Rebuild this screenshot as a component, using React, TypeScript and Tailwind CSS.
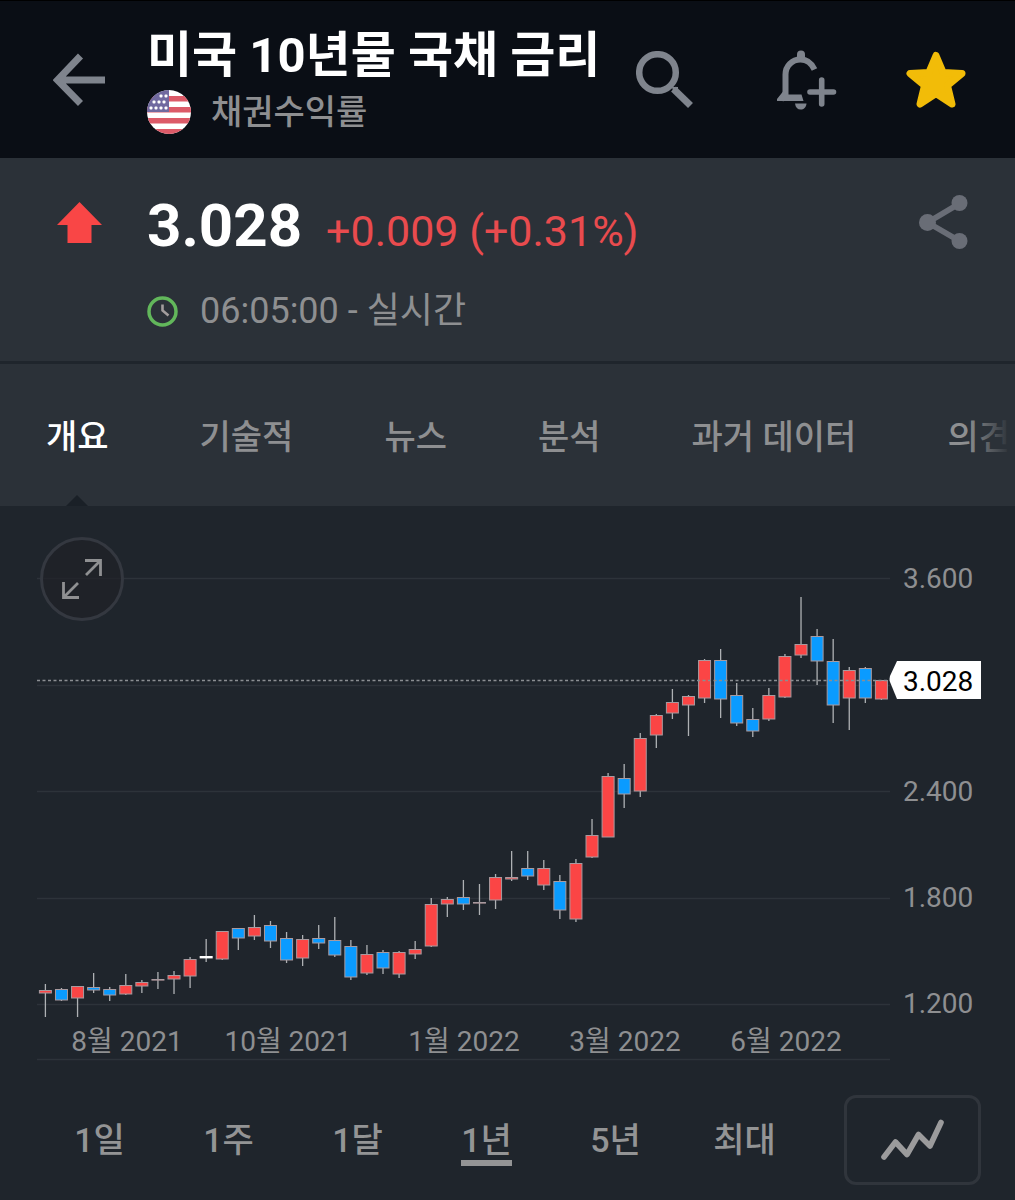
type Candle = [top: number, bottom: number, high: number, low: number, kind: 'up' | 'down' | 'flat'];

const candles: Candle[] = [
  [990, 993, 984, 1017, 'up'],
  [989, 1000, 988, 1001, 'down'],
  [986, 998, 986, 1017, 'up'],
  [987, 990, 973, 993, 'down'],
  [989, 995, 987, 1001, 'down'],
  [985, 994, 974, 995, 'up'],
  [982, 986, 980, 993, 'up'],
  [979, 980, 972, 989, 'up'],
  [975, 979, 971, 994, 'up'],
  [959, 976, 957, 988, 'up'],
  [956, 959, 939, 962, 'flat'],
  [931, 959, 931, 960, 'up'],
  [928, 938, 928, 950, 'down'],
  [927, 936, 915, 940, 'up'],
  [925, 941, 921, 948, 'down'],
  [938, 960, 932, 963, 'down'],
  [939, 958, 935, 966, 'up'],
  [938, 943, 925, 949, 'down'],
  [940, 955, 917, 957, 'down'],
  [946, 977, 940, 980, 'down'],
  [954, 973, 945, 975, 'up'],
  [952, 968, 950, 974, 'down'],
  [952, 974, 951, 978, 'up'],
  [949, 954, 941, 959, 'up'],
  [904, 946, 898, 947, 'up'],
  [899, 904, 897, 917, 'up'],
  [897, 904, 880, 910, 'down'],
  [902, 903, 884, 915, 'up'],
  [877, 900, 874, 909, 'up'],
  [877, 879, 851, 881, 'up'],
  [868, 876, 851, 880, 'down'],
  [868, 885, 860, 890, 'up'],
  [881, 910, 875, 919, 'down'],
  [863, 919, 859, 922, 'up'],
  [835, 857, 819, 858, 'up'],
  [776, 837, 773, 837, 'up'],
  [778, 794, 764, 808, 'down'],
  [738, 791, 733, 797, 'up'],
  [715, 735, 714, 748, 'up'],
  [702, 713, 689, 719, 'up'],
  [696, 705, 695, 736, 'up'],
  [660, 698, 659, 703, 'up'],
  [660, 699, 649, 718, 'down'],
  [695, 723, 683, 726, 'down'],
  [719, 731, 708, 737, 'down'],
  [695, 719, 688, 721, 'up'],
  [656, 697, 654, 698, 'up'],
  [644, 655, 597, 658, 'up'],
  [636, 661, 629, 685, 'down'],
  [661, 705, 639, 723, 'down'],
  [670, 698, 667, 730, 'up'],
  [668, 698, 667, 703, 'down'],
  [680, 699, 680, 700, 'up'],
];

const fills = { up: '#fb4545', down: '#0a9bff', flat: '#ffffff' };

const gridLines = [578, 685, 791, 898, 1004, 1059];

const priceLabels = [
  { y: 588, text: '3.600' },
  { y: 801, text: '2.400' },
  { y: 907, text: '1.800' },
  { y: 1013, text: '1.200' },
];

const dateLabels = [
  { x: 127, text: '8월 2021' },
  { x: 288, text: '10월 2021' },
  { x: 464, text: '1월 2022' },
  { x: 625, text: '3월 2022' },
  { x: 786, text: '6월 2022' },
];

const tabs = ['개요', '기술적', '뉴스', '분석', '과거 데이터', '의견'];
const periods = ['1일', '1주', '1달', '1년', '5년', '최대'];

function UsFlag() {
  const stars = [
    [14, 6], [19, 6],
    [7, 12], [12, 12], [17, 12],
    [4, 18], [9, 18], [14, 18], [19, 18],
  ];
  return (
    <svg viewBox="0 0 44 44" className="size-11 shrink-0" role="img" aria-label="미국">
      <defs>
        <clipPath id="flag-circle">
          <circle cx="22" cy="22" r="22" />
        </clipPath>
      </defs>
      <g clipPath="url(#flag-circle)">
        <rect width="44" height="44" fill="#ffffff" />
        {[6, 17, 28, 39].map((y) => (
          <rect key={y} y={y} width="44" height="5.5" fill="#dc5a68" />
        ))}
        <rect width="22" height="22" fill="#70699f" />
        {stars.map(([x, y]) => (
          <rect key={`${x}-${y}`} x={x - 1.5} y={y - 1.5} width="3" height="3" rx="1" fill="#ffffff" />
        ))}
      </g>
    </svg>
  );
}

function Header() {
  return (
    <header className="flex h-[158px] items-center border-t border-black bg-[#0a0e15] pr-[49px] pl-[53px] text-[#7f848d]">
      <button type="button" aria-label="뒤로" className="mr-[41px] shrink-0">
        <svg viewBox="0 0 53 54" className="h-[54px] w-[53px]" fill="none" stroke="currentColor" strokeWidth="7">
          <path d="M52 27H5M27.500 3L4.500 27L27.500 50.500" />
        </svg>
      </button>
      <div className="min-w-0 pt-2">
        <h1 className="text-[49px] leading-[56px] font-bold whitespace-nowrap text-white">미국 10년물 국채 금리</h1>
        <div className="flex h-14 items-center gap-5">
          <UsFlag />
          <p className="text-[34px] leading-[48px] font-medium whitespace-nowrap text-[#8e8f91]">채권수익률</p>
        </div>
      </div>
      <div className="ml-auto flex shrink-0 items-center">
        <button type="button" aria-label="검색">
          <svg viewBox="0 0 58 58" className="size-[58px]" fill="none" stroke="currentColor">
            <circle cx="21.500" cy="21.500" r="18.300" strokeWidth="6.500" />
            <path d="M37.500 38L54.500 54.500" strokeWidth="7" />
            <path d="M36 36h6v5l-5 -1z" fill="currentColor" stroke="none" />
          </svg>
        </button>
        <button type="button" aria-label="알림 추가" className="ml-[83px]">
          <svg viewBox="0 0 60 60" className="size-[60px]" fill="none" stroke="currentColor">
            <path d="M37.500 19.500C34.500 13 29.500 9.500 23.500 9.500C15 9.500 8.500 16 8.500 24.500V45L4 49.500" strokeWidth="6" />
            <path d="M20 4.500a4 4 0 0 1 8 0V10h-8z" fill="currentColor" stroke="none" />
            <path d="M0 49L6 41.500L8 44.500H24.500L26.500 51H0z" fill="currentColor" stroke="none" />
            <path d="M18 53.500H29.500C29 57.500 26.800 59.500 23.700 59.500S18.500 57.500 18 53.500z" fill="currentColor" stroke="none" />
            <path d="M33 42H56.500M44.700 30V54" strokeWidth="5.600" strokeLinecap="round" />
          </svg>
        </button>
        <button type="button" aria-label="즐겨찾기" aria-pressed="true" className="ml-[69px] text-[#f2bc08]">
          <svg viewBox="0 0 60 60" className="size-[60px]" fill="currentColor" stroke="currentColor" strokeWidth="7" strokeLinejoin="round">
            <path d="M30 5.500L37.200 22.500L56 23.500L41.500 35.500L46 54L30 43.500L14 54L18.500 35.500L4 23.500L22.800 22.500z" />
          </svg>
        </button>
      </div>
    </header>
  );
}

function Quote() {
  return (
    <section className="flex h-[206px] items-start border-b-3 border-[#1f252c] bg-[#2b3138] pr-[47px] pl-[57px]">
      <svg viewBox="0 0 45 41" className="mt-11 mr-[45px] h-[41px] w-[45px] shrink-0" fill="#f94646" aria-label="상승" role="img">
        <path d="M22.500 0L45 23H34.500V41H10.500V23H0z" />
      </svg>
      <div className="min-w-0 pt-8">
        <p className="flex items-baseline gap-6 whitespace-nowrap">
          <span className="text-[60px] leading-[72px] font-bold text-white">3.028</span>
          <span className="text-[43px] leading-[72px] text-[#e94b4e]">+0.009 (+0.31%)</span>
        </p>
        <p className="mt-5 flex h-12 items-center gap-[22px] text-[#8e8f91]">
          <svg viewBox="0 0 31 31" className="size-[31px] shrink-0" fill="none" aria-hidden="true">
            <circle cx="15.500" cy="15.500" r="13.500" stroke="#62b75b" strokeWidth="3.500" />
            <path d="M15.500 8.500V14.500L21.500 19.500" stroke="#a39d9d" strokeWidth="2.600" />
          </svg>
          <span className="text-[36px] leading-[48px] whitespace-nowrap">06:05:00 - 실시간</span>
        </p>
      </div>
      <button type="button" aria-label="공유" className="mt-9 ml-auto shrink-0 text-[#696d76]">
        <svg viewBox="0 0 49 56" className="h-14 w-[49px]" fill="currentColor" stroke="currentColor">
          <path d="M40.500 9.500L8.500 28.500L40.500 47" fill="none" strokeWidth="5.600" />
          <circle cx="40.500" cy="9" r="8" stroke="none" />
          <circle cx="8.500" cy="28.500" r="8.500" stroke="none" />
          <circle cx="40.500" cy="47" r="8" stroke="none" />
        </svg>
      </button>
    </section>
  );
}

function Tabs() {
  return (
    <nav className="relative overflow-hidden bg-[#2b3138]">
      <div role="tablist" className="flex h-[142px] gap-[91px] pl-[46px]">
        {tabs.map((tab, i) => (
          <button
            key={tab}
            type="button"
            role="tab"
            aria-selected={i === 0}
            className="relative shrink-0 pt-1 text-[34px] leading-[48px] font-medium whitespace-nowrap text-[#8e8f91] aria-selected:text-white"
          >
            {tab}
            {i === 0 && (
              <svg viewBox="0 0 22 11" className="absolute bottom-0 left-1/2 h-[11px] w-[22px] -translate-x-1/2" fill="#1a2027" aria-hidden="true">
                <path d="M11 0L22 11H0z" />
              </svg>
            )}
          </button>
        ))}
      </div>
      <div className="pointer-events-none absolute inset-y-0 right-0 w-12 bg-linear-to-r from-transparent to-[#2b3138] to-90%" />
    </nav>
  );
}

function Chart() {
  return (
    <section className="relative">
      <svg viewBox="0 506 1015 556" className="block h-auto w-full" role="img" aria-label="1년 금리 차트">
        {gridLines.map((y) => (
          <path key={y} d={`M37 ${y + 0.5}H890`} stroke="#2d333a" strokeWidth="1.500" />
        ))}
        {candles.map(([top, bottom, high, low, kind], i) => {
          const x = 45.4 + i * 16.077;
          return (
            <g key={i}>
              <path d={`M${x} ${high}V${low}`} stroke="#aeb1b4" strokeWidth="1.300" />
              {kind === 'flat' ? (
                <rect x={x - 6.5} y={top} width="13" height="2.400" fill={fills.flat} />
              ) : (
                <rect
                  x={x - 6}
                  y={top + 0.5}
                  width="12"
                  height={Math.max(bottom - top - 0.5, 0.6)}
                  fill={fills[kind]}
                  stroke="#a89a9f"
                  strokeWidth="1"
                />
              )}
            </g>
          );
        })}
        <path d="M37 680.500H890" stroke="#8b8e92" strokeWidth="1.300" strokeDasharray="3 2.500" />
        <g fontSize="28" fill="#8e8f91">
          {priceLabels.map(({ y, text }) => (
            <text key={text} x="903" y={y}>{text}</text>
          ))}
          {dateLabels.map(({ x, text }) => (
            <text key={text} x={x} y="1051" textAnchor="middle">{text}</text>
          ))}
        </g>
        <path d="M897 661H981V699H897L890 682Q889 679 890 676z" fill="#ffffff" />
        <text x="903" y="691" fontSize="28" fill="#000000">3.028</text>
      </svg>
      <button
        type="button"
        aria-label="전체 화면"
        className="absolute top-[31px] left-10 flex size-[84px] items-center justify-center rounded-full border-3 border-[#343840] bg-[#1f2127]/70 text-[#8f9092]"
      >
        <svg viewBox="0 0 42 42" className="size-[42px]" fill="none" stroke="currentColor" strokeWidth="2.800">
          <path d="M24 2.500H39.500V18M39 3L25 17M2.500 24V39.500H18M3 39L17 25" />
        </svg>
      </button>
    </section>
  );
}

function Periods() {
  return (
    <section className="flex items-center pt-[33px] pr-[34px] pb-[15px] pl-[35px]">
      <div className="flex flex-1">
        {periods.map((period) => (
          <button
            key={period}
            type="button"
            aria-pressed={period === '1년'}
            className="group flex-1 text-[34px] font-medium whitespace-nowrap text-[#939495]"
          >
            <span className="inline-block border-y-6 border-transparent leading-[40px] group-aria-pressed:border-b-[#939495]">{period}</span>
          </button>
        ))}
      </div>
      <button
        type="button"
        aria-label="차트 유형"
        className="ml-[35px] flex h-[90px] w-[137px] items-center justify-center rounded-xl border-3 border-[#30353c] text-[#9b9b9c]"
      >
        <svg viewBox="0 0 62 40" className="h-10 w-[62px] overflow-visible" fill="none" stroke="currentColor" strokeWidth="5.600" strokeLinecap="round" strokeLinejoin="round">
          <path d="M2 37L13.500 22L25 34.500L36.500 14.500L48 26L59 2.500" />
        </svg>
      </button>
    </section>
  );
}

export default function App() {
  return (
    <main className="min-h-screen bg-[#1f252c] font-[Roboto,'Noto_Sans_CJK_KR',sans-serif]">
      <Header />
      <Quote />
      <Tabs />
      <Chart />
      <Periods />
    </main>
  );
}
